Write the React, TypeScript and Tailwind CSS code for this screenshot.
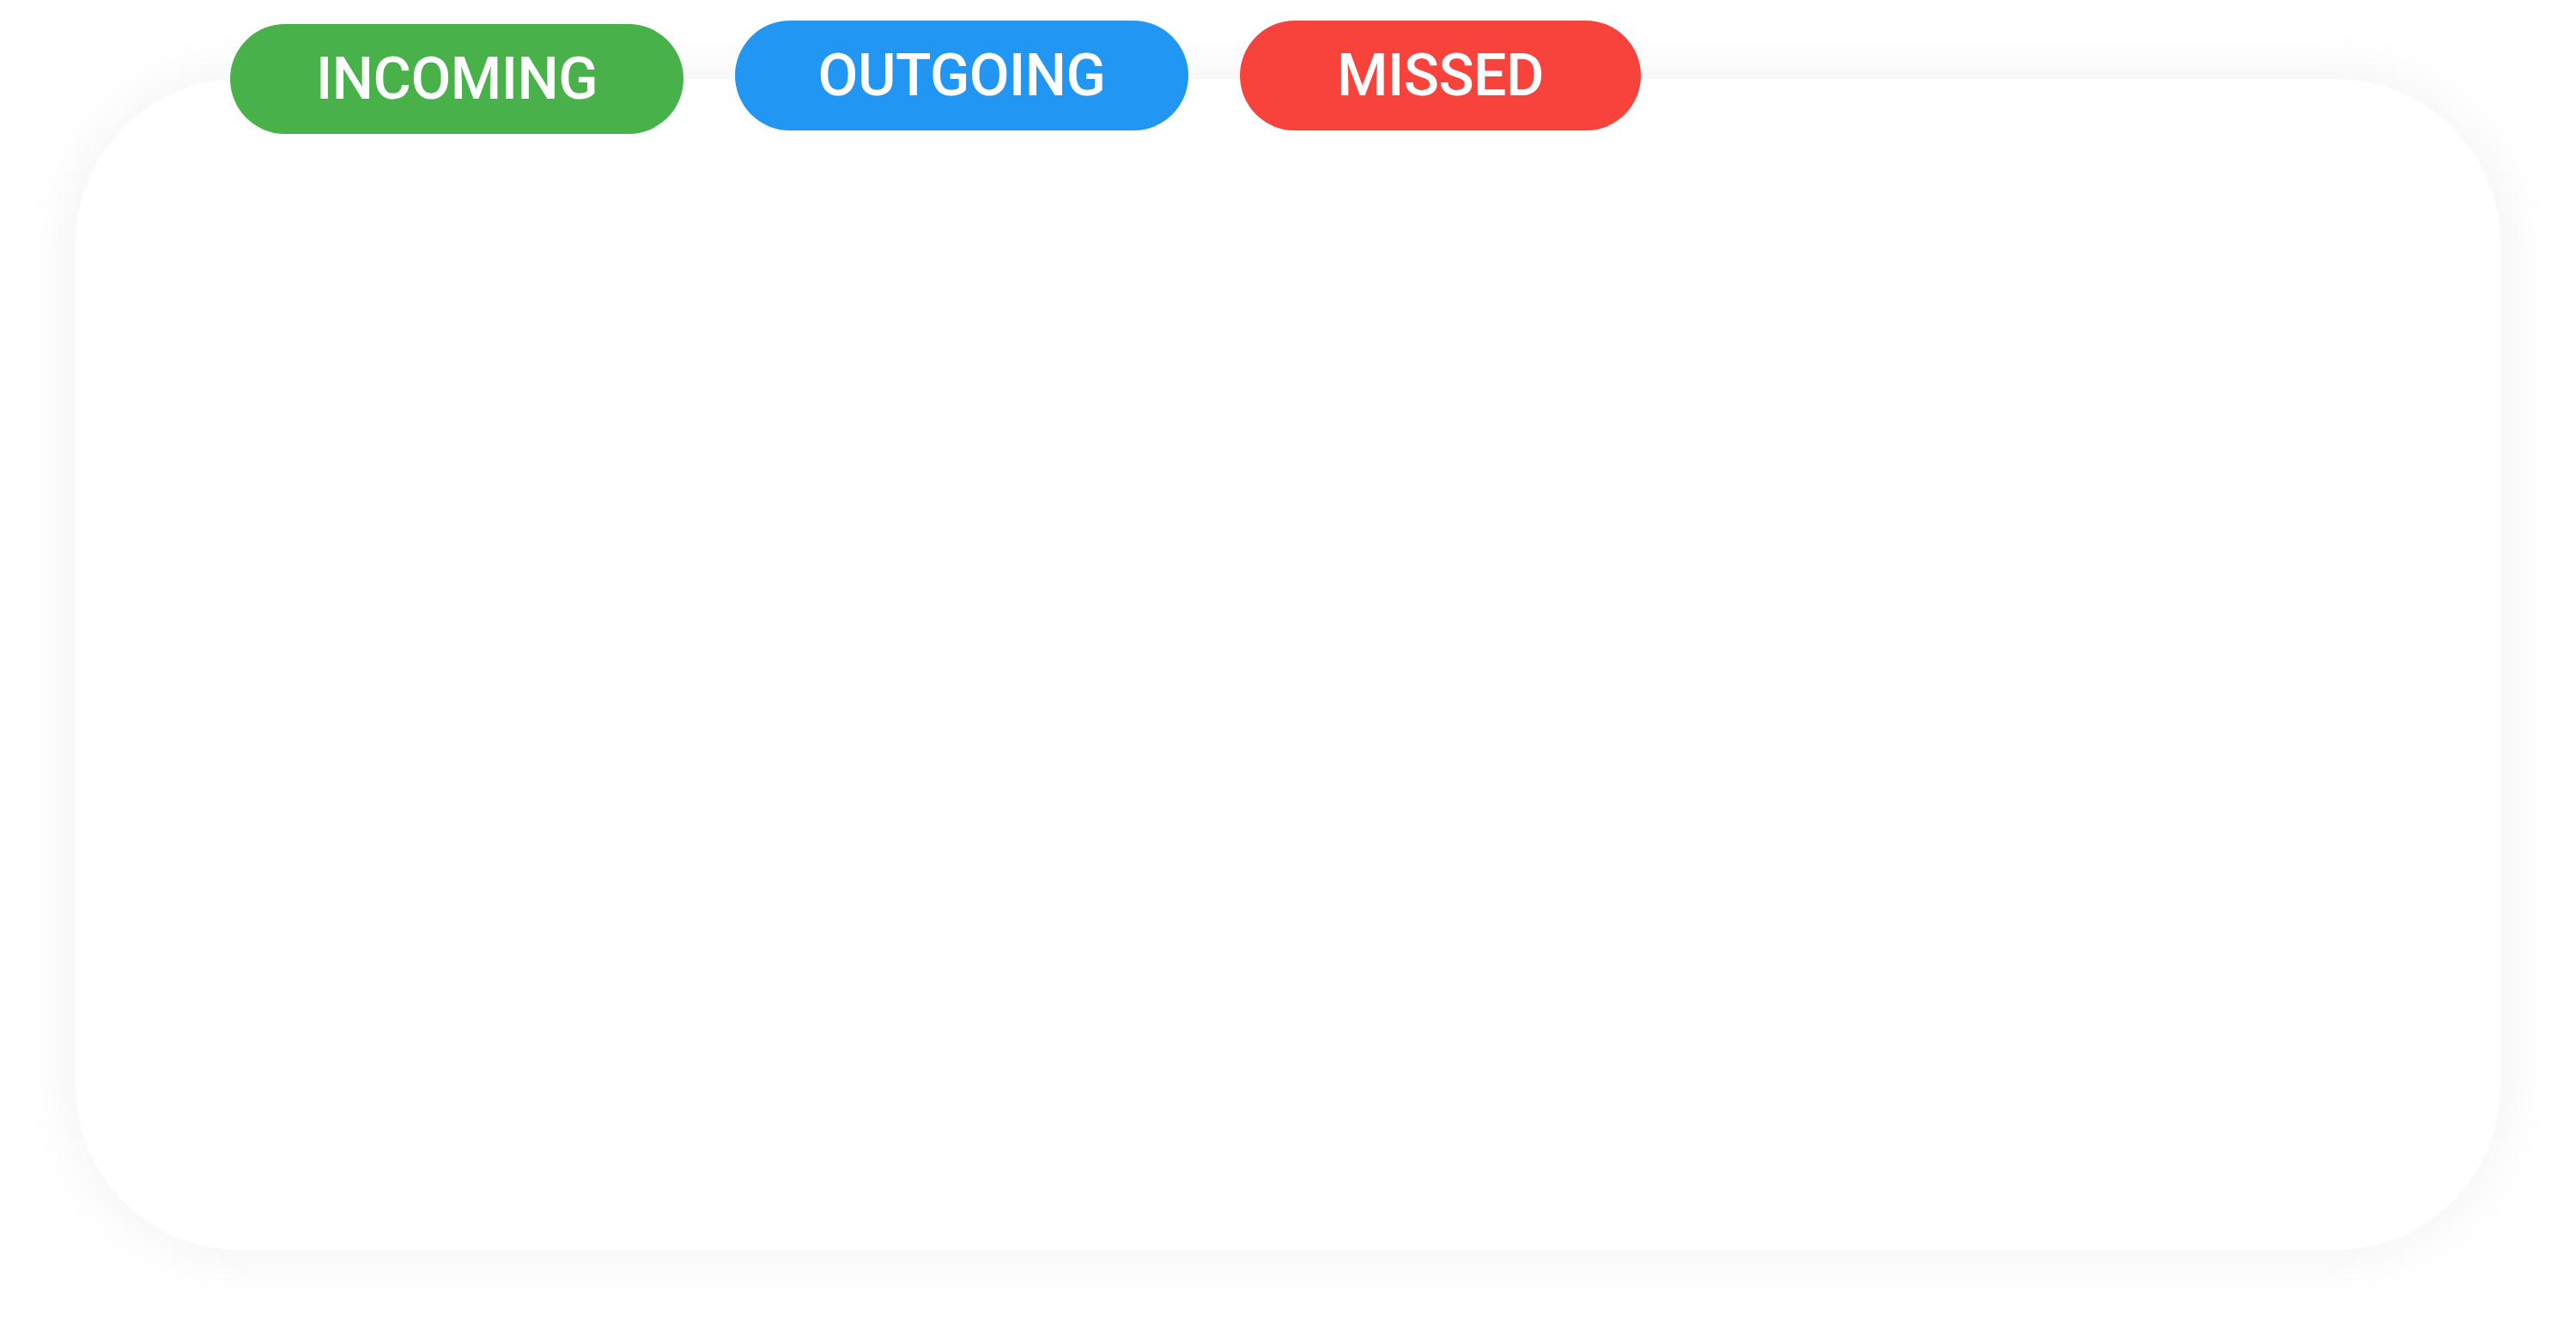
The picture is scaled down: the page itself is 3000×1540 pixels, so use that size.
import React from 'react';

const tabs = [
  { key: 'incoming', label: 'INCOMING', color: 'bg-[#49b14a]', width: 'w-[528px]', offset: 'mt-[4px]' },
  { key: 'outgoing', label: 'OUTGOING', color: 'bg-[#2196f3]', width: 'w-[528px]', offset: '' },
  { key: 'missed', label: 'MISSED', color: 'bg-[#f7433c]', width: 'w-[467px]', offset: '' },
];

const App = () => {
  return (
    <div className="w-[3000px] h-[1540px] bg-white pt-[24px] px-[88px] overflow-hidden">
      {/* Tabs sit over the top edge of the card */}
      <div className="relative z-10 flex items-start gap-[60px] pl-[180px] -mb-[64px]">
        {tabs.map((tab) => (
          <div
            key={tab.key}
            className={`${tab.color} ${tab.width} ${tab.offset} h-[128px] rounded-full flex items-center justify-center text-white text-[68px] leading-none font-medium tracking-[-0.5px] font-['Roboto',sans-serif]`}
          >
            {tab.label}
          </div>
        ))}
      </div>
      <div className="h-[1364px] rounded-[192px] bg-white shadow-[0_0_60px_12px_rgba(0,0,0,0.045)]" />
    </div>
  );
};

export default App;
